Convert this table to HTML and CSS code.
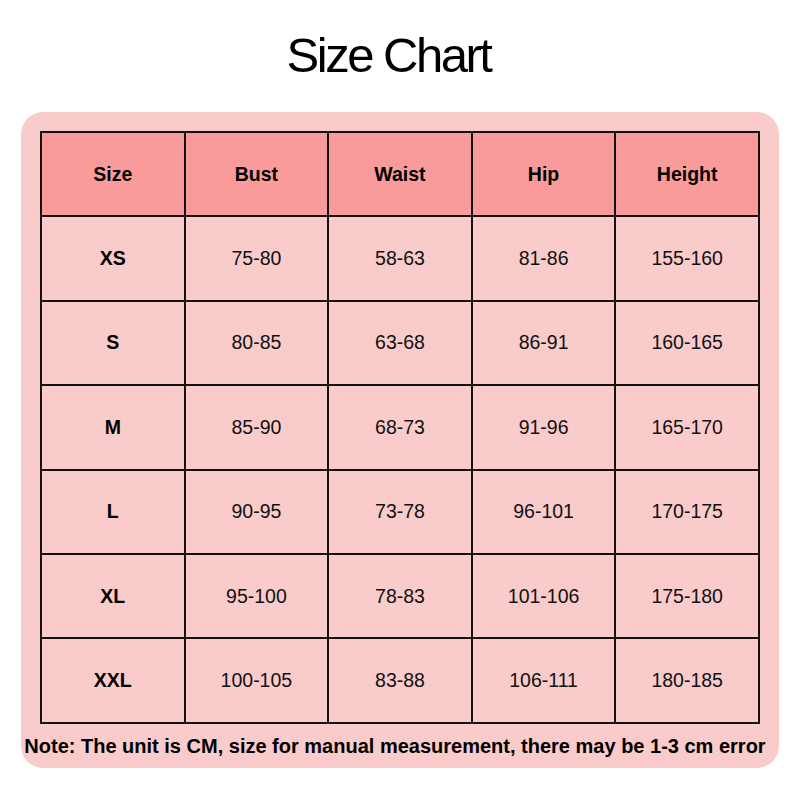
FILE: index.html
```html
<!DOCTYPE html>
<html>
<head>
<meta charset="utf-8">
<link rel="stylesheet" href="styles.css">
</head>
<body>
<h1 class="title">Size Chart</h1>
<div class="panel">
  <table class="chart">
    <thead>
      <tr><th>Size</th><th>Bust</th><th>Waist</th><th>Hip</th><th>Height</th></tr>
    </thead>
    <tbody>
      <tr><td class="sz">XS</td><td>75-80</td><td>58-63</td><td>81-86</td><td>155-160</td></tr>
      <tr><td class="sz">S</td><td>80-85</td><td>63-68</td><td>86-91</td><td>160-165</td></tr>
      <tr><td class="sz">M</td><td>85-90</td><td>68-73</td><td>91-96</td><td>165-170</td></tr>
      <tr><td class="sz">L</td><td>90-95</td><td>73-78</td><td>96-101</td><td>170-175</td></tr>
      <tr><td class="sz">XL</td><td>95-100</td><td>78-83</td><td>101-106</td><td>175-180</td></tr>
      <tr><td class="sz">XXL</td><td>100-105</td><td>83-88</td><td>106-111</td><td>180-185</td></tr>
    </tbody>
  </table>
  <p class="note">Note: The unit is CM, size for manual measurement, there may be 1-3 cm error</p>
</div>
</body>
</html>
```

FILE: styles.css
```css
html, body {
  margin: 0;
  padding: 0;
  background: #ffffff;
  font-family: "Liberation Sans", Arial, sans-serif;
  color: #000;
}
.title {
  margin: 0;
  height: 112px;
  display: flex;
  align-items: center;
  justify-content: center;
  font-size: 49px;
  font-weight: normal;
  letter-spacing: -2.5px;
  padding: 0 23px 2px 0;
  box-sizing: border-box;
}
.panel {
  margin: 0 21px;
  height: 656px;
  box-sizing: border-box;
  background: #f9cbcb;
  border-radius: 22px;
  padding: 19px 19px 0 19px;
}
.chart {
  width: 720px;
  border-collapse: collapse;
  table-layout: fixed;
}
.chart th, .chart td {
  border: 2px solid #141111;
  height: 82.4px;
  padding: 0;
  text-align: center;
  vertical-align: middle;
  font-size: 19.5px;
}
.chart th {
  background: #fa9b9b;
  font-weight: bold;
}
.chart td {
  background: #f9cbcb;
  color: #111;
}
.chart td.sz {
  font-weight: bold;
  color: #000;
}
.note {
  margin: 11px 0 0 -19px;
  width: 758px;
  padding-right: 10px;
  box-sizing: border-box;
  text-align: center;
  font-size: 20px;
  font-weight: bold;
  white-space: nowrap;
}
```
